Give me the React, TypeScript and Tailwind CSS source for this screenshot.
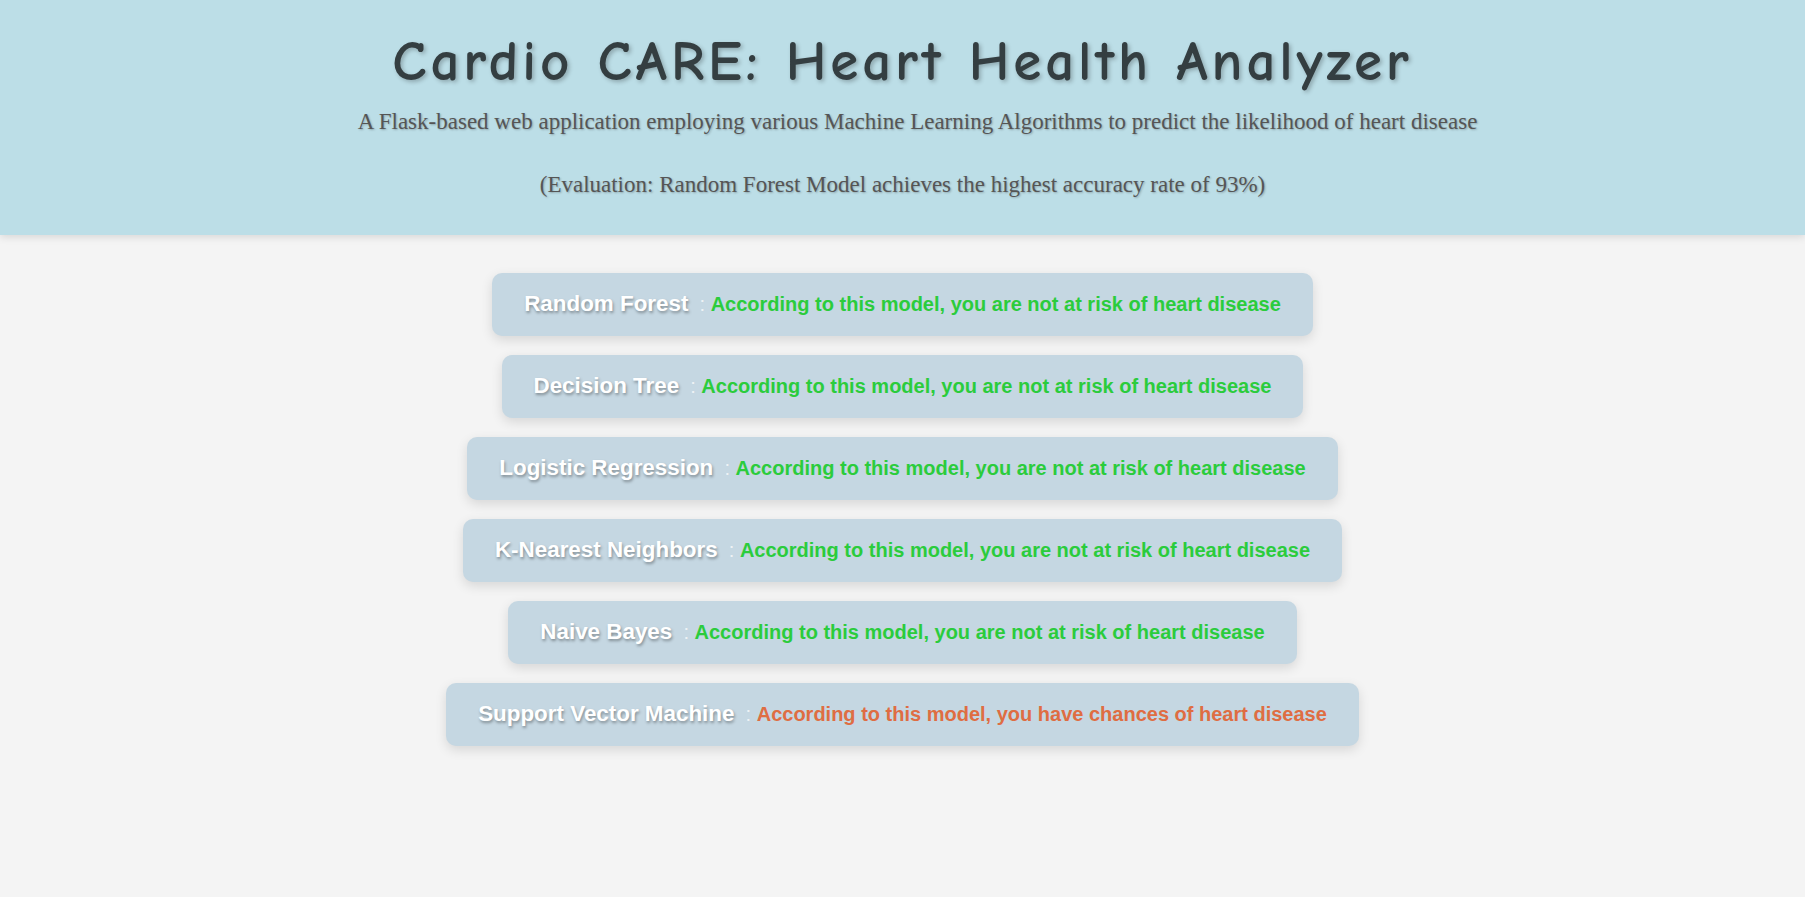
import React from "react";

const results: { name: string; text: string; risk: boolean }[] = [
  { name: "Random Forest", text: "According to this model, you are not at risk of heart disease", risk: false },
  { name: "Decision Tree", text: "According to this model, you are not at risk of heart disease", risk: false },
  { name: "Logistic Regression", text: "According to this model, you are not at risk of heart disease", risk: false },
  { name: "K-Nearest Neighbors", text: "According to this model, you are not at risk of heart disease", risk: false },
  { name: "Naive Bayes", text: "According to this model, you are not at risk of heart disease", risk: false },
  { name: "Support Vector Machine", text: "According to this model, you have chances of heart disease", risk: true },
];

export default function App() {
  return (
    <div className="min-h-screen bg-[#f4f4f4] font-['Liberation_Sans',Arial,sans-serif]">
      <header className="h-[235px] bg-[#bcdee7] text-center pt-[28px] shadow-[0_2px_8px_rgba(0,0,0,0.12)] relative">
        <h1 className="font-['Comic_Sans_MS','Comic_Neue',cursive] font-bold text-[57px] leading-[67px] tracking-[3.9px] text-[#343e41] [text-shadow:2px_2px_4px_rgba(0,0,0,0.25)]">
          Cardio CARE: Heart Health Analyzer
        </h1>
        <p className="mt-[13px] pl-[30px] font-['Liberation_Serif','Times_New_Roman',serif] text-[23px] leading-[27px] text-[#555] [text-shadow:1px_1px_2px_rgba(0,0,0,0.25)]">
          A Flask-based web application employing various Machine Learning Algorithms to predict the likelihood of heart disease
        </p>
        <p className="mt-[36px] font-['Liberation_Serif','Times_New_Roman',serif] text-[23px] leading-[27px] text-[#555] [text-shadow:1px_1px_2px_rgba(0,0,0,0.25)]">
          (Evaluation: Random Forest Model achieves the highest accuracy rate of 93%)
        </p>
      </header>
      <main className="flex flex-col items-center gap-[19px] pt-[38px]">
        {results.map((r) => (
          <div
            key={r.name}
            className="flex h-[63px] items-center rounded-[10px] bg-[#c5d7e2] px-[32px] shadow-[0_4px_12px_rgba(0,0,0,0.12)] whitespace-nowrap"
          >
            <div className="leading-[23px]">
              <span className="text-[22.4px] font-bold text-white [text-shadow:1px_2px_3px_rgba(0,0,0,0.35)]">{r.name}</span>
              <span className="text-[20px] text-[#eef2f5]">{"\u00a0\u00a0:\u00a0"}</span>
              <span className={`text-[20px] font-bold ${r.risk ? "text-[#df6d42]" : "text-[#2bcc3c]"}`}>{r.text}</span>
            </div>
          </div>
        ))}
      </main>
    </div>
  );
}
